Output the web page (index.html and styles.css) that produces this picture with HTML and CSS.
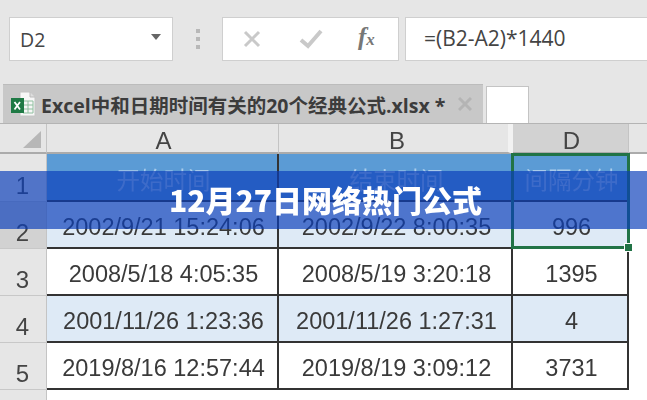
FILE: index.html
```html
<!DOCTYPE html>
<html lang="zh">
<head>
<meta charset="utf-8">
<title>12月27日网络热门公式</title>
<link rel="stylesheet" href="styles.css">
</head>
<body>
<div class="shot">
  <div class="toolbar">
    <div class="formula-row">
      <div class="namebox"><span>D2</span><i class="caret"></i></div>
      <div class="dots"><b></b><b></b><b></b></div>
      <div class="buttons">
        <svg class="ico-x" viewBox="0 0 18 18" width="18" height="18"><path d="M2 2 16 16M16 2 2 16" stroke="#c9c9c9" stroke-width="3" fill="none"/></svg>
        <svg class="ico-check" viewBox="0 0 24 20" width="24" height="20"><path d="M2 11 9 17 22 2" stroke="#c9c9c9" stroke-width="4" fill="none"/></svg>
        <span class="fx">f<small>x</small></span>
      </div>
      <div class="formula">=(B2-A2)*1440</div>
    </div>
    <div class="tab-row">
      <div class="tab">
        <svg class="xl" viewBox="0 0 26 26" width="26" height="26">
          <path d="M10 1h10l5 5v19H10z" fill="#f7f7f7" stroke="#c4c4c4"/>
          <path d="M20 1v5h5" fill="#ddd" stroke="#bbb"/>
          <path d="M13 10h10v12H13zM13 14h10M13 18h10M18 10v12" fill="none" stroke="#8fbf9f"/>
          <rect x="1" y="7" width="13" height="15" fill="#1f7a45"/>
          <path d="M4.5 11 10 18.5M10 11 4.5 18.5" stroke="#fff" stroke-width="1.8"/>
        </svg>
        <span class="tab-name">Excel中和日期时间有关的20个经典公式.xlsx *</span>
        <svg class="tab-close" viewBox="0 0 14 14" width="14" height="14"><path d="M1 1 13 13M13 1 1 13" stroke="#b4b4b4" stroke-width="3" fill="none"/></svg>
      </div>
      <div class="newtab"></div>
    </div>
  </div>
  <div class="sheet">
    <div class="colhead corner"><i class="tri"></i></div>
    <div class="colhead">A</div>
    <div class="colhead colb">B</div>
    <div class="colhead cold">D</div>
    <div class="colhead rest"></div>

    <div class="rowhead r1">1</div>
    <div class="cell title">开始时间</div>
    <div class="cell title">结束时间</div>
    <div class="cell title">间隔分钟</div>
    <div class="blank"></div>

    <div class="rowhead r2 sel">2</div>
    <div class="cell band">2002/9/21 15:24:06</div>
    <div class="cell band">2002/9/22 8:00:35</div>
    <div class="cell band">996</div>
    <div class="blank"></div>

    <div class="rowhead r3">3</div>
    <div class="cell">2008/5/18 4:05:35</div>
    <div class="cell">2008/5/19 3:20:18</div>
    <div class="cell">1395</div>
    <div class="blank"></div>

    <div class="rowhead r4">4</div>
    <div class="cell band">2001/11/26 1:23:36</div>
    <div class="cell band">2001/11/26 1:27:31</div>
    <div class="cell band">4</div>
    <div class="blank"></div>

    <div class="rowhead r5">5</div>
    <div class="cell">2019/8/16 12:57:44</div>
    <div class="cell">2019/8/19 3:09:12</div>
    <div class="cell">3731</div>
    <div class="blank"></div>

    <div class="rowhead tail"></div>
    <div class="blank tailfill"></div>

    <div class="selection"><i class="handle"></i></div>
  </div>
</div>
<div class="banner"><h1>12月27日网络热门公式</h1></div>
</body>
</html>
```
FILE: styles.css
```css
* { box-sizing: border-box; }
html, body { margin: 0; padding: 0; }
body {
  width: 647px;
  height: 400px;
  overflow: hidden;
  position: relative;
  background: #fff;
  font-family: "Liberation Sans", "Noto Sans CJK SC", sans-serif;
}
.shot { filter: blur(0.5px); width: 647px; height: 400px; overflow: hidden; }

.toolbar { height: 124px; background: #e6e6e6; padding-top: 17px; border-bottom: 1px solid #b4b4b4; }
.formula-row { display: flex; height: 44px; padding-left: 9px; }
.namebox {
  width: 164px; background: #fff; border: 1.5px solid #cfcfcf;
  display: flex; align-items: center; justify-content: space-between;
  padding: 0 11px 0 10px;
  font: 19.5px "Open Sans", "Liberation Sans", sans-serif; color: #444;
}
.caret { width: 0; height: 0; border: 5.5px solid transparent; border-top: 6px solid #666; border-bottom: 0; margin-bottom: 5px; }
.dots { width: 49px; display: flex; flex-direction: column; align-items: center; justify-content: center; gap: 4px; }
.dots b { width: 4px; height: 4px; background: #b8b8b8; }
.buttons {
  width: 177px; background: #fff; border: 1.5px solid #cfcfcf;
  display: flex; align-items: center; padding-left: 20px;
}
.ico-check { margin-left: 38px; }
.fx { margin-left: 35px; font: italic bold 25px "Liberation Serif", serif; color: #777; margin-bottom: 4px; }
.fx small { font-size: 17px; }
.formula {
  flex: 1; margin-left: 6px; background: #fff; border: 1.5px solid #cfcfcf; border-right: 0;
  padding-left: 18px; display: flex; align-items: center;
  font: 21px "Open Sans", "Liberation Sans", sans-serif; color: #444; padding-bottom: 3px;
}

.tab-row { display: flex; margin: 23px 0 0 3px; height: 39px; align-items: flex-end; }
.tab {
  width: 480px; height: 39px; background: #c8c8c8;
  border-top: 1px solid #bcbcbc;
  display: flex; align-items: center; padding-left: 7px;
}
.xl { flex: none; }
.tab-name { margin-left: 5px; font: bold 19.5px "Open Sans", "Noto Sans CJK SC", sans-serif; color: #3c3c3c; white-space: nowrap; width: 410px; }
.tab-close { margin-left: 7px; }
.newtab { width: 43px; height: 37px; margin-left: 3px; background: #fff; border: 1.5px solid #c4c4c4; border-bottom: 0; }

.sheet {
  position: relative;
  display: grid;
  grid-template-columns: 47px 232px 234px 116px 1fr;
  grid-template-rows: 30px 48px 47px 47px 47px 47px 1fr;
  height: 276px;
}
.colhead {
  background: #e6e6e6; border-bottom: 2px solid #ababab; border-right: 1px solid #c4c4c4;
  display: flex; align-items: center; justify-content: center;
  font-size: 24px; color: #444; padding-top: 5px; padding-left: 2px;
}
.corner { position: relative; }
.tri { position: absolute; right: 5px; bottom: 4px; border-style: solid; border-width: 0 0 17px 18px; border-color: transparent transparent #b7b7b7 transparent; }
.colb { border-right: 5px solid #f2f2f2; padding-left: 7px; }
.cold { background: #d2d2d2; }
.rest { border-right: 0; }
.rowhead {
  background: #e6e6e6; border-bottom: 1px solid #c8c8c8; border-right: 1px solid #c4c4c4;
  display: flex; align-items: flex-end; justify-content: center;
  font-size: 24px; line-height: 28px; color: #444; padding: 0 1px 1px 0;
}
.rowhead.sel { background: #d2d2d2; }
.cell {
  display: flex; align-items: center; justify-content: center;
  font-size: 23.5px; color: #3a3a3a;
  border-right: 2px solid #333; border-bottom: 2px solid #333;
  padding: 6px 0 0 3px; white-space: nowrap;
}
.band { background: #deeaf6; }
.title { background: #5b9bd5; color: #a9cbea; font-family: "Noto Sans CJK SC", sans-serif; padding: 4px 0 0 3px; }
.blank { background: #fff; }
.tail { grid-column: 1; border-bottom: 0; }
.tailfill { grid-column: 2 / -1; }

.selection {
  position: absolute; left: 511px; top: 29px; width: 119px; height: 96px;
  border: 3px solid #217346; pointer-events: none;
}
.handle { position: absolute; right: -6px; bottom: -6px; width: 9px; height: 9px; background: #217346; border: 1px solid #fff; }

.banner {
  position: absolute; left: 0; right: 0; top: 171px; height: 58px;
  background: rgba(10, 62, 185, 0.68);
  display: flex; align-items: center; justify-content: center;
  padding: 0 0 2px 4px;
}
.banner h1 { margin: 0; font: 900 30px "Noto Sans CJK SC", sans-serif; color: #fff; line-height: 56px; }
```
